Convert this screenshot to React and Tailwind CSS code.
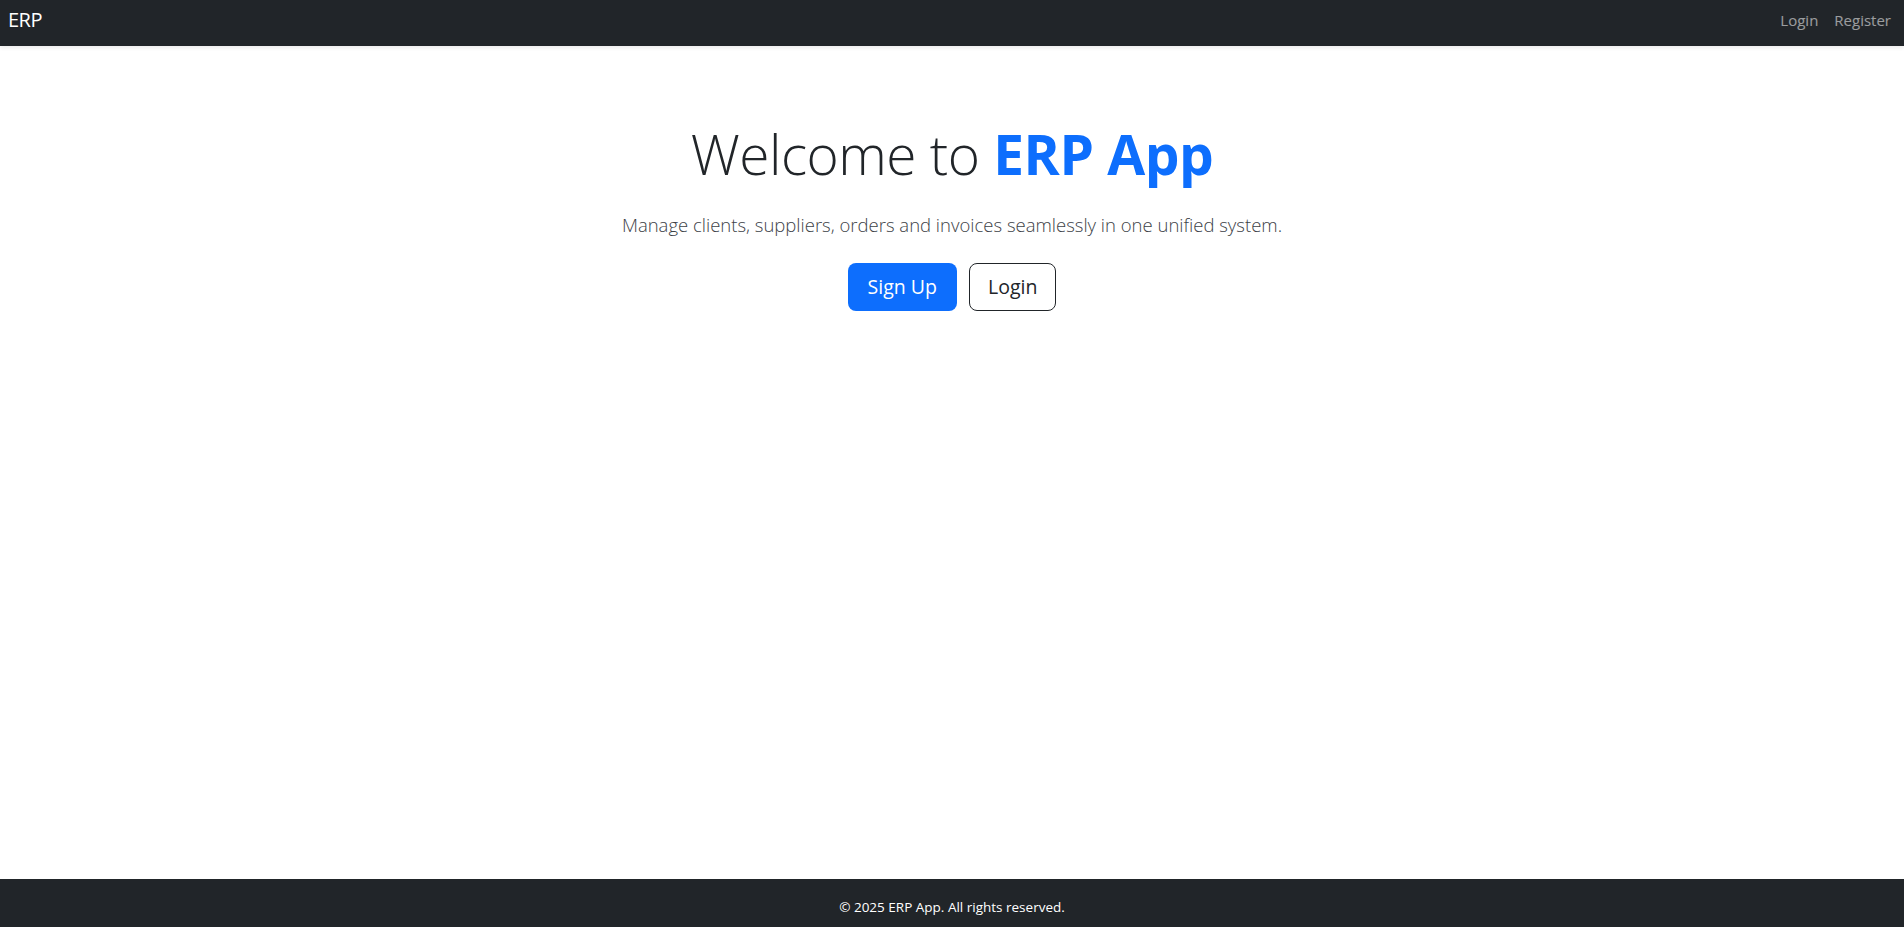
export default function App() {
  return (
    <div className="min-h-screen flex flex-col bg-white text-[#212529]" style={{ fontFamily: '"Open Sans", "Noto Sans", sans-serif' }}>
      <nav className="h-[46px] bg-[#212529] flex items-center justify-between pl-[8px] pr-[5px] shadow-[0_2px_4px_rgba(0,0,0,0.08)]">
        <a className="text-white text-[20px] leading-none -mt-[6px] tracking-[-0.5px]">ERP</a>
        <div className="flex -mt-[5px]">
          <a className="px-2 text-[15px] text-white/55">Login</a>
          <a className="px-2 text-[15px] text-white/55">Register</a>
        </div>
      </nav>

      <main className="flex-1 flex flex-col items-center pt-[75px]">
        <h1 className="text-[55px] leading-[1.2] font-light mb-[24px] tracking-[-0.5px]">
          Welcome to <span className="font-bold text-[#0d6efd]">ERP App</span>
        </h1>
        <p className="text-[18.5px] leading-[1.5] font-light text-[#3d4247] mb-[24px]">
          Manage clients, suppliers, orders and invoices seamlessly in one unified system.
        </p>
        <div className="flex gap-[12px]">
          <button className="h-[48px] px-5 rounded-lg bg-[#0d6efd] text-white text-[19.5px]">Sign Up</button>
          <button className="h-[48px] px-[18px] rounded-lg border border-[#212529] text-[19.5px]">Login</button>
        </div>
      </main>

      <footer className="h-[48px] bg-[#212529] text-white flex justify-center pt-[22px]">
        <p className="text-[13.5px] leading-none">© 2025 ERP App. All rights reserved.</p>
      </footer>
    </div>
  );
}
